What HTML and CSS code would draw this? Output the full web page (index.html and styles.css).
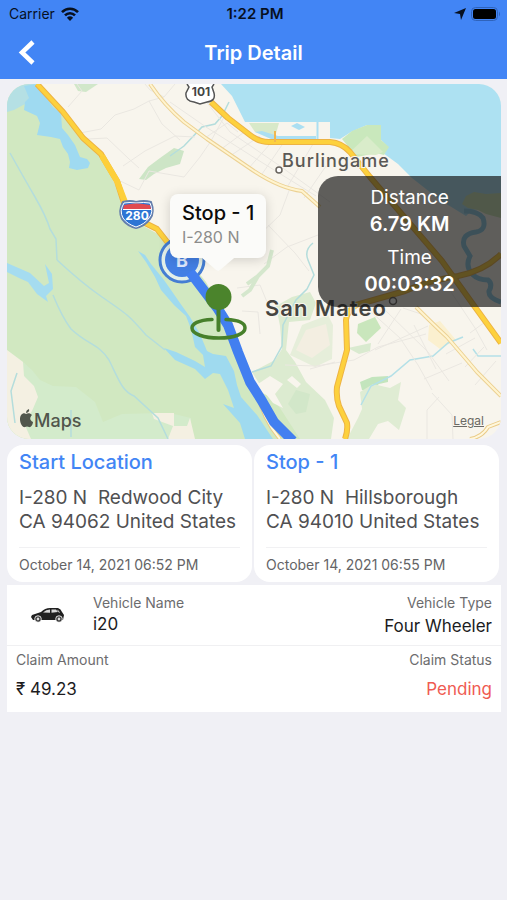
FILE: index.html
```html
<!DOCTYPE html>
<html lang="en">
<head>
<meta charset="utf-8">
<meta name="viewport" content="width=device-width, initial-scale=1">
<title>Trip Detail</title>
<link rel="stylesheet" href="styles.css">
</head>
<body>
<header class="top">
  <div class="status">
    <div class="status-left">
      <span>Carrier</span>
      <svg width="18" height="14" viewBox="0 0 18 14" aria-hidden="true">
        <g fill="none" stroke="#07101f" stroke-width="2.6"><path d="M1 5.2C5.4.6 12.600.6 17 5.200"/><path d="M4 8.400c2.800-2.900 7.200-2.900 10 0"/></g>
        <path d="M9 14 5.900 10.700q3.100-2.700 6.200 0z" fill="#07101f"/>
      </svg>
    </div>
    <span class="clock">1:22 PM</span>
    <div class="status-right">
      <svg width="12" height="12" viewBox="0 0 12 12" aria-hidden="true"><path d="M12 0 7 12 6 6 0 5z" fill="#07101f"/></svg>
      <svg width="30" height="14" viewBox="0 0 30 14" aria-hidden="true"><rect x=".5" y=".5" width="26" height="13" rx="4" fill="none" stroke="#2f63bb"/><rect x="2" y="2" width="23" height="10" rx="2.500" fill="#000"/><path d="M28 4.500q2 2.500 0 5z" fill="#2f63bb"/></svg>
    </div>
  </div>
  <nav class="nav">
    <button class="back" type="button" aria-label="Back"><svg width="18" height="26" viewBox="0 0 18 26" aria-hidden="true"><path d="M15 2 4 12.500 15 23" fill="none" stroke="#fff" stroke-width="4.500"/></svg></button>
    <h1>Trip Detail</h1>
  </nav>
</header>
<main>
  <section class="map" aria-label="Trip map">
    <svg class="map-art" viewBox="7 84 494 355" role="img" aria-label="Route along I-280 near San Mateo">
      <rect x="7" y="84" width="494" height="355" fill="#f8f5ed"/>
      <!-- parkland -->
      <path d="M7 84H36L62 113 84 141 103 157 113 180 124 204 136 222 158 234 167 246 190 262 206 282 222 310 236 338 247 370 256 390 275 399 291 412 305 439H7z" fill="#d1e8c1"/>
      <path d="M7 350 22 361 32 370 40 380 53 386 76 387 95 402 103 422 122 414 160 413 174 414 191 418 190 439H7z" fill="#d3ebcb"/>
      <path d="M7 350 23 362 24 376 34 386 38 397 32 411 24 423 31 439H7z" fill="#f4f0e2"/>
      <path d="M152 413H174V426H187L190 418 195 439H168L173 426 154 419z" fill="#f4f0e2"/>
      <path d="M60 84H98L86 92 78 91 74 84z" fill="#d1e7ca"/>
      <path d="M139 179 148 167 160 158 174 148 184 151 180 164 166 168 154 174 146 180z" fill="#cde5c6"/>
      <path d="M252 372 275 360 282 349 280 326 276 306 292 297 310 292 316 303 310 320 289 322 286 350 295 362 306 382 325 400 334 418 331 439H300L280 408 262 388z" fill="#dcebd0"/>
      <path d="M258 384 270 376 283 384 275 394 283 408 273 403zM292 376 301 384 297 388 287 380z" fill="#f8f5ed"/>
      <path d="M288 404 296 390 310 394 306 412 296 414z" fill="#d2e7c9"/>
      <path d="M302 325 328 315 333 325 332 359 315 367 290 355z" fill="#e6eeda"/>
      <path d="M306 330 326 324 330 345 312 358 296 350z" fill="#f3eee1"/>
      <path d="M358 324 375 317 381 328 366 342 357 333z" fill="#c9e6bc"/>
      <path d="M360 382 372 377 388 376 388 382 379 384 370 391 362 390z" fill="#c3e5bd"/>
      <path d="M360 392 373 384 390 388 401 382 398 400 406 408 399 430 388 421 378 424 369 439H347L358 418 362 409z" fill="#dfecd3"/>
      <path d="M348 348 371 343 370 351 359 354z" fill="#d9eacf"/>
      <path d="M429 325 440 321 456 340 440 349 428 340z" fill="#fbf0cf"/>
      <!-- bay -->
      <path d="M221 84 232 96 238 108 245 122 330 122V138L340 139 351 132 367 125 381 125 381 140 388 147 383 153 398 164 412 178 440 200 466 216 472 210 501 207V84z" fill="#ade1f2"/>
      <path d="M250 123H316V139H330V122H245L247 132 269 138H316V123H303V128H292V123z" fill="#f8f5ed"/>
      <path d="M249 123H279L275 137 255 132z" fill="#d8e9c9"/>
      <path d="M255 132 271 139H316V136L278 136 262 131zM291 126l6-3 8 4-6 3z" fill="#abdff2"/>
      <path d="M317.500 122V139" stroke="#abdff2" stroke-width="2"/>
      <path d="M342 139 352 131 367 125 381 125 381 140 389 147 384 155 376 153 357 157 351 150z" fill="#c9e8bc"/>
      <path d="M348 154 367 136 383 152 376 155z" fill="#d9ecca"/>
      <path d="M462 204 466 196 474 192 486 194 501 193V218L486 214 478 210 468 208z" fill="#cbe3b5"/>
      <path d="M464 211Q478 211 483 218 487 230 476 232 461 234 464 246L470 256Q465 266 472 274 478 280 488 280 493 284 489 291 488 298 501 302" fill="none" stroke="#8fcbe4" stroke-width="5"/>
      <!-- reservoirs -->
      <path d="M7 112V98Q12 88 22 84H36L37 92 25 104 14 110z" fill="#b5e0e4"/>
      <path d="M24 86 37 84 43 93 53 107 61 113 62 128 68 135 75 145 80 157 87 159 90 163 88 168 77 170 69 168 70 162 68 154 63 147 60 139 51 137 37 135 40 123 37 116 24 110 25 102 29 98z" fill="#9fdaf1"/>
      <path d="M7 263 30 273 44 286 49 283 45 264 52 274 53 289 46 296 48 302 37 294 28 282 19 278 7 272z" fill="#a5dcf0"/>
      <path d="M138 251 145 255 151 264 164 280 171 290 180 303 190 317 200 334 207 351 213 354 226 356 234 371 237 385 241 397 257 415 273 439H245L240 423 223 404 234 408 228 390 220 374 213 373 205 379 195 369 175 360 164 348 176 352 195 361 205 367 203 355 195 347 191 329 186 316 174 305 161 290 155 277 146 262z" fill="#9fdaef"/>
      <g fill="none" stroke="#b4dddc" stroke-width="1.500">
        <path d="M10 153Q24 178 35 197T50 229L56 239 57 260"/><path d="M53 295Q62 317 71 329C88 345 99 344 109 360 119 380 122 391 134 396L158 418 168 439"/><path d="M57 260Q83 284 102 297T127 315 146 335L165 350"/><path d="M17 373 11 391 15 423M71 410V437"/>
        <path d="M229 102 222 116 215 124 202 127 184 146 170 156M313 243Q304 250 308 260L314 275 307 289 296 300 283 325 282 346 271 366 252 372"/><path d="M463 337 448 343 433 356 410 360 391 376 371 386 361 405M473 349 478 356H501" stroke="#b4e0e7"/>
      </g>
      <!-- streets -->
      <g fill="none" stroke="#eae7e1" stroke-width="1">
        <path d="M68 107 82 91 77 84M80 133 101 129 115 115 134 109 149 101 164 97 175 84M88 139 107 138 129 159 139 168M149 101 162 124 180 140M164 97 150 90 145 84M123 166 145 151 175 136 195 137M116 179 139 190 149 171 184 177 200 157 211 141 224 117M205 138 227 123 238 132M220 150 247 130M230 156 260 136M248 169 270 144M260 177 284 142M286 189 313 144M304 198 326 166M205 100 230 132 280 166 330 202M170 102 206 127 258 160 316 196M268 225 295 253 309 271M264 264 287 247 318 235M256 238 280 215 290 188M237 288 260 285 267 302M242 311 258 312 260 334M285 365 316 366 354 360 378 347 426 334M310 369 335 362M370 311 400 338 418 365 432 390M385 310 428 352 449 381M375 350 428 326M403 308 427 316M414 325 436 369M424 379 462 363M446 354 475 338M465 367 484 347M475 385 496 361M378 344 401 309M432 393 452 415 453 439M427 439V410L439 397M451 292 475 328 487 350M470 333 485 322"/>
      </g>
      <path d="M272 250 268 266 258 276 250 290 242 296M258 276 247 284" fill="none" stroke="#d5e7cd" stroke-width="4"/>
      <g fill="none" stroke-linejoin="round">
        <path d="M150 84Q164 105 184 122L207 139 248 167Q278 188 302 191L320 207M416 307Q434 325 447 337 460 352 477 372L501 396" stroke="#ecd193" stroke-width="4"/>
        <path d="M150 84Q164 105 184 122L207 139 248 167Q278 188 302 191L320 207M416 307Q434 325 447 337 460 352 477 372L501 396" stroke="#fff4cf" stroke-width="2"/>
        <path d="M257 392Q263 419 280 439M470 439Q482 437 488 427L501 422" stroke="#eacb87" stroke-width="4"/>
        <path d="M257 392Q263 419 280 439M470 439Q482 437 488 427L501 422" stroke="#fff7dc" stroke-width="2"/>
        <path d="M37 84 63 112 83 138 101 154Q108 166 117 181L124 203 135 218 157 229 168 243M211 102 228 118 250 135Q259 142 269 142H330Q342 143 350 152L370 177 442 261 457 282 475 307 501 343M501 254Q484 271 458 276 430 280 405 291L356 305Q347 311 346 320L347 350 337 387Q336 398 339 406L347 423Q348 431 345 439" stroke="#edb344" stroke-width="6"/>
        <path d="M37 84 63 112 83 138 101 154Q108 166 117 181L124 203 135 218 157 229 168 243M211 102 228 118 250 135Q259 142 269 142H330Q342 143 350 152L370 177 442 261 457 282 475 307 501 343M501 254Q484 271 458 276 430 280 405 291L356 305Q347 311 346 320L347 350 337 387Q336 398 339 406L347 423Q348 431 345 439" stroke="#fdd13d" stroke-width="4"/>
        <path d="M102 156Q108 166 117 181L125 202" stroke="#fdcf3a" stroke-width="6"/>
        <path d="M275 131V142" stroke="#f0b750" stroke-width="2"/>
      </g>
      <!-- route -->
      <circle cx="182" cy="260" r="22" fill="#e3efe8"/>
      <circle cx="182" cy="260" r="22" fill="none" stroke="#447dd3" stroke-width="3"/>
      <circle cx="182" cy="260" r="17" fill="#437fe4"/>
      <text class="marker" x="182" y="267" text-anchor="middle">B</text>
      <path d="M190 272 218 309 228 325 238 352 250 382 262 401 274 422 293 441" fill="none" stroke="#427ff0" stroke-width="10" stroke-linejoin="round"/>
      <!-- road shields -->
      <path d="M187 84 189 87 186 93Q185 101 194 102L200 104 207 102Q216 101 214 93L212 87 214 84" fill="#fff" stroke="#555" stroke-width="1.500"/>
      <text class="shield" x="201" y="96" text-anchor="middle">101</text>
      <path d="M123 202Q130 200 136 202 144 200 151 202 155 212 150 219 145 226 136 228 127 226 122 219 118 211 123 202z" fill="#2d75d4" stroke="#657fac" stroke-width="2"/>
      <path d="M124 203Q130 202 136 203 144 202 150 203 154 212 149 218 145 224 136 227 127 224 123 218 119 211 124 203z" fill="#2d75d4" stroke="#fff" stroke-width="1"/>
      <path d="M124 205Q136 202 150 205L151 209H123z" fill="#e04a50"/><path d="M123 209.500H151" stroke="#fff"/>
      <text class="shield shield-blue" x="137" y="220" text-anchor="middle">280</text>
      <!-- place names -->
      <g fill="#fff" stroke="#69655f" stroke-width="1.500"><circle cx="279" cy="170" r="3"/><circle cx="393" cy="301" r="3.500"/></g>
      <text class="place" x="282" y="167">Burlingame</text>
      <text class="place city" x="265" y="316">San Mateo</text>
      <!-- stop pin -->
      <path d="M212 319.500C198 320 192 324 192 328 192 334 204 338 219 338 234 338 245 334 245 328 245 323 238 320 226 319.500" fill="none" stroke="#47802b" stroke-width="3.500" stroke-linecap="round"/>
      <path d="M218.500 305V330" stroke="#47802b" stroke-width="4" stroke-linecap="round"/><circle cx="218.500" cy="297" r="13" fill="#4b842c"/>
      <!-- map credit -->
      <path d="M26 414C24 412 20 414 20 419 20 424 23 428 25 427Q27 426 29 427C31 428 33 424 33 422 29 420 30 417 32 415 30 413 28 413 26 414zM26 413Q26 410 29 409 30 412 26 413z" fill="#51564c"/>
      <text class="credit" x="34" y="427">Maps</text>
    </svg>
    <div class="callout"><strong>Stop - 1</strong><span>I-280 N</span></div>
    <dl class="stats">
      <dt>Distance</dt><dd>6.79 KM</dd>
      <dt>Time</dt><dd>00:03:32</dd>
    </dl>
    <a class="legal" href="#legal">Legal</a>
  </section>
  <section class="stops">
    <article class="stop"><h2>Start Location</h2><p>I-280 N&nbsp; Redwood City<br>CA 94062 United States</p><time datetime="2021-10-14T18:52">October 14, 2021 06:52 PM</time></article>
    <article class="stop"><h2>Stop - 1</h2><p>I-280 N&nbsp; Hillsborough<br>CA 94010 United States</p><time datetime="2021-10-14T18:55">October 14, 2021 06:55 PM</time></article>
  </section>
  <section class="details">
    <div class="row vehicle">
      <svg class="car" width="34" height="16" viewBox="0 0 34 16" aria-hidden="true">
        <path d="M1 8 10 5Q14 1 19 1H27Q30 2 31 5L33 8 32 13H2L0 10z" fill="#202020"/>
        <path d="M12 5.500Q15 2.500 19 2.500V5.800zM20.500 2.500H25L27 5 20.500 5.800zM27 3l2 2.500-1 .3-2-3z" fill="#d8d8d8"/>
        <g fill="#999" stroke="#fff" stroke-width=".7"><circle cx="7" cy="12" r="3.300"/><circle cx="28" cy="12" r="3.300"/></g>
        <g fill="#ddd" stroke="#333" stroke-width="1.200"><circle cx="7" cy="12" r="2"/><circle cx="28" cy="12" r="2"/></g>
      </svg>
      <div class="field name"><span class="label">Vehicle Name</span><span class="value">i20</span></div>
      <div class="field type"><span class="label">Vehicle Type</span><span class="value">Four Wheeler</span></div>
    </div>
    <div class="row claim">
      <div class="field"><span class="label">Claim Amount</span><span class="value">₹ 49.23</span></div>
      <div class="field type"><span class="label">Claim Status</span><span class="value pending">Pending</span></div>
    </div>
  </section>
</main>
</body>
</html>
```
FILE: styles.css
```css
* { box-sizing: border-box; }
body {
  margin: 0;
  min-height: 100vh;
  background: #f0f0f5;
  color: #1c1c1e;
  font-family: Inter, "Liberation Sans", sans-serif;
}
h1, h2, p, dl, dd { margin: 0; }
svg { display: block; }

.top { background: #4285f5; }
.status {
  display: grid;
  grid-template-columns: 1fr auto 1fr;
  align-items: center;
  height: 27px;
  padding: 0 6px 0 9px;
  color: #07101f;
  font-size: 14px;
}
.status-left, .status-right { display: flex; align-items: center; gap: 6px; }
.status-right { justify-content: flex-end; gap: 5px; }
.clock { font-size: 15px; font-weight: 600; }
.nav {
  display: grid;
  grid-template-columns: 1fr auto 1fr;
  align-items: center;
  height: 52px;
  padding: 0 18px;
}
.back { justify-self: start; padding: 0; border: 0; background: none; }
h1 { color: #fff; font-size: 20px; line-height: 24px; font-weight: 600; }

main { padding: 5px 6px 0 7px; }
.map { position: relative; overflow: hidden; border-radius: 22px; }
.map-art { width: 100%; height: auto; }
.marker { fill: #dfeaff; font-size: 18px; font-weight: 700; }
.shield { fill: #444; font-size: 12px; font-weight: 700; }
.shield-blue { fill: #fff; }
.place {
  fill: #5b5955;
  stroke: #f8f5ed;
  stroke-width: 2px;
  paint-order: stroke;
  font-size: 18px;
  font-weight: 500;
  letter-spacing: 1px;
}
.city { fill: #454440; font-size: 22px; font-weight: 600; }
.credit { fill: #51564c; font-size: 18px; font-weight: 500; }
.callout {
  position: absolute;
  left: 33%;
  top: 31%;
  display: flex;
  flex-direction: column;
  padding: 5px 12px 11px;
  border-radius: 8px;
  background: #fbfbf9;
  box-shadow: 0 2px 12px rgba(0, 0, 0, .16);
}
.callout::after {
  content: "";
  position: absolute;
  left: 50%;
  top: 100%;
  width: 32px;
  height: 13px;
  margin-left: -16px;
  background: #fbfbf9;
  clip-path: polygon(0 0, 100% 0, 58% 88%, 50% 100%, 42% 88%);
}
.callout strong { color: #0b0b0b; font-size: 20px; line-height: 28px; font-weight: 500; }
.callout span { color: #8c8c8b; font-size: 16px; line-height: 20px; }
.stats {
  position: absolute;
  right: 0;
  top: 26%;
  width: 37%;
  padding: 9px 0 10px;
  border-radius: 20px 0 0 20px;
  background: rgba(20, 20, 20, .67);
  color: #fff;
  font-size: 19px;
  line-height: 26px;
  text-align: center;
}
.stats dd { font-size: 20px; font-weight: 600; }
.stats dd + dt { margin-top: 8px; }
.legal {
  position: absolute;
  right: 17px;
  bottom: 10px;
  color: #6b6964;
  font-size: 12px;
  line-height: 16px;
}

.stops { display: grid; grid-template-columns: 1fr 1fr; gap: 2px; padding: 6px 2px 3px 0; }
.stop { padding: 4px 12px 8px; border-radius: 16px; background: #fff; }
h2 { color: #4285f5; font-size: 20px; line-height: 26px; font-weight: 500; }
.stop p {
  margin-top: 11px;
  padding-bottom: 13px;
  border-bottom: 1px solid #f1f1f3;
  color: #505052;
  font-size: 19px;
  line-height: 24px;
  white-space: nowrap;
}
.stop time { display: block; margin-top: 8px; color: #646466; font-size: 14px; line-height: 18px; }

.details { background: #fff; }
.row { display: flex; padding: 8px 9px; }
.vehicle { height: 61px; border-bottom: 1px solid #f0f0f2; }
.car { margin: 14px 28px 0 15px; }
.field { display: flex; flex-direction: column; }
.type { margin-left: auto; text-align: right; }
.label { color: #6c6c6e; font-size: 14px; line-height: 20px; }
.value { font-size: 17px; line-height: 22px; }
.vehicle .type .value { margin-top: 2px; }
.claim { padding-top: 4px; padding-bottom: 12px; }
.claim .value { margin-top: 8px; }
.claim .pending { color: #ef5b52; }
```
